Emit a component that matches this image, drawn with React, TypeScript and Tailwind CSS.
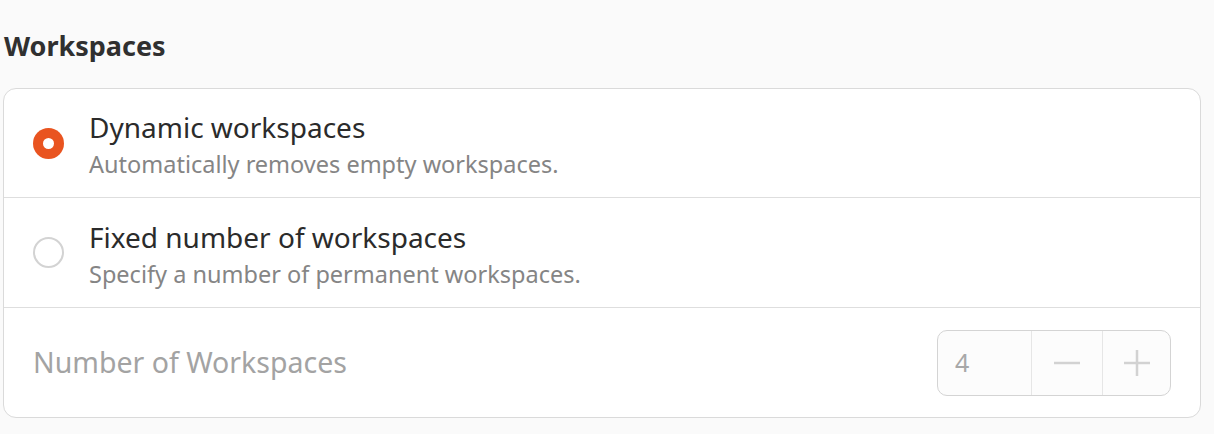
import React from "react";

const options = [
  {
    title: "Dynamic workspaces",
    subtitle: "Automatically removes empty workspaces.",
    checked: true,
    height: "h-[109px]",
  },
  {
    title: "Fixed number of workspaces",
    subtitle: "Specify a number of permanent workspaces.",
    checked: false,
    height: "h-[110px]",
  },
];

function Radio({ checked }: { checked: boolean }) {
  if (checked) {
    return (
      <span className="flex h-[31px] w-[31px] shrink-0 items-center justify-center rounded-full bg-[#e95420]">
        <span className="h-[11px] w-[11px] rounded-full bg-white" />
      </span>
    );
  }
  return <span className="h-[31px] w-[31px] shrink-0 rounded-full border-2 border-[#d3d3d3] bg-white" />;
}

function SpinButton({ value }: { value: number }) {
  return (
    <div className="flex h-[66px] w-[234px] overflow-hidden rounded-[10px] border border-[#d4d4d4] bg-[#fcfcfc]">
      <div className="flex w-[93px] items-center pl-[17px] text-[25px] text-[#a8a8a8]">{value}</div>
      <div className="flex w-[71px] items-center justify-center border-l border-[#e6e6e6]">
        <svg width="30" height="30" viewBox="0 0 30 30">
          <path d="M2 15h26" stroke="#d2d2d2" strokeWidth="2.5" />
        </svg>
      </div>
      <div className="flex flex-1 items-center justify-center border-l border-[#e6e6e6]">
        <svg width="30" height="30" viewBox="0 0 30 30">
          <path d="M2 15h26M15 2v26" stroke="#d2d2d2" strokeWidth="2.5" />
        </svg>
      </div>
    </div>
  );
}

export default function App() {
  return (
    <div className="min-h-screen bg-[#fafafa] pl-[3px] pr-[13px] font-['Noto_Sans',sans-serif]">
      <h2 className="pt-[29px] pb-[25px] pl-[1px] text-[27px] font-bold leading-[34px] text-[#303030]">
        Workspaces
      </h2>
      <div className="rounded-[13px] border border-[#dadada] bg-white">
        {options.map((o) => (
          <div key={o.title} className={`flex ${o.height} items-center border-b border-[#dedede] pl-[29px]`}>
            <Radio checked={o.checked} />
            <div className="ml-[25px] mt-[3px] flex flex-col gap-[7px]">
              <span className="text-[28px] leading-[32px] text-[#2b2b2b]">{o.title}</span>
              <span className="text-[23.5px] leading-[28px] text-[#858585]">{o.subtitle}</span>
            </div>
          </div>
        ))}
        <div className="flex h-[109px] items-center justify-between pl-[29px] pr-[29px]">
          <span className="text-[28.5px] text-[#a3a3a3]">Number of Workspaces</span>
          <SpinButton value={4} />
        </div>
      </div>
    </div>
  );
}
